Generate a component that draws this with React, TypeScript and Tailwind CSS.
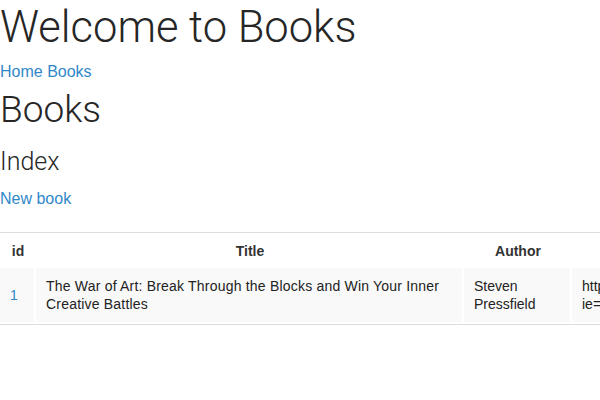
export default function App() {
  const link = "text-[#3188c8]";
  return (
    <div className="bg-white w-[600px] h-[400px] overflow-hidden text-[#333] font-['Liberation_Sans',Arial,sans-serif]">
      <h1 className="font-['Roboto',sans-serif] font-light text-[43.5px] leading-[48px] mt-[4px] text-[#262626] whitespace-nowrap">
        Welcome to Books
      </h1>
      <p className="text-[16px] leading-[20px] mt-[10px]">
        <a className={link} href="#">Home</a> <a className={link} href="#">Books</a>
      </p>
      <h1 className="font-['Roboto',sans-serif] font-light text-[37px] leading-[40px] mt-[8px] text-[#262626]">Books</h1>
      <h3 className="font-['Roboto',sans-serif] font-light text-[25px] leading-[28px] mt-[18px] text-[#262626]">Index</h3>
      <p className="text-[16px] leading-[20px] mt-[13px]">
        <a className={link} href="#">New book</a>
      </p>
      <div className="mt-[23px] border-t border-b border-[#dddddd] w-[1000px]">
        <table className="table-fixed border-separate border-spacing-0 w-[1000px] text-[14px]">
          <colgroup>
            <col className="w-[36px]" />
            <col className="w-[428px]" />
            <col className="w-[108px]" />
            <col className="w-[428px]" />
          </colgroup>
          <thead>
            <tr>
              <th className="font-bold text-center leading-[20px] pt-[8px] pb-[7px] text-[#333]">id</th>
              <th className="font-bold text-center leading-[20px] pt-[8px] pb-[7px] text-[#333]">Title</th>
              <th className="font-bold text-center leading-[20px] pt-[8px] pb-[7px] text-[#333]">Author</th>
              <th className="font-bold text-center leading-[20px] pt-[8px] pb-[7px] text-[#333]">Link</th>
            </tr>
          </thead>
          <tbody>
            <tr className="bg-[#f9f9f9] align-middle">
              <td className="px-[10px] pt-[10px] pb-[9px] leading-[17.5px] border-r-2 border-b-2 border-white">
                <a className={link} href="#">1</a>
              </td>
              <td className="px-[10px] pt-[10px] pb-[9px] leading-[17.5px] border-r-2 border-b-2 border-white text-[#222] tracking-[0.2px]">
                The War of Art: Break Through the Blocks and Win Your Inner Creative Battles
              </td>
              <td className="px-[10px] pt-[10px] pb-[9px] leading-[17.5px] border-r-2 border-b-2 border-white text-[#222]">
                Steven Pressfield
              </td>
              <td className="px-[10px] pt-[10px] pb-[9px] leading-[17.5px] border-r-2 border-b-2 border-white text-[#222] whitespace-nowrap">
                http://www.amazon.com/War-Art-Through-Creative-Battles/dp/1936891026/ref=sr_1_1?
                <br />
                ie=UTF8&amp;qid=1398712345&amp;sr=8-1
              </td>
            </tr>
          </tbody>
        </table>
      </div>
    </div>
  );
}
